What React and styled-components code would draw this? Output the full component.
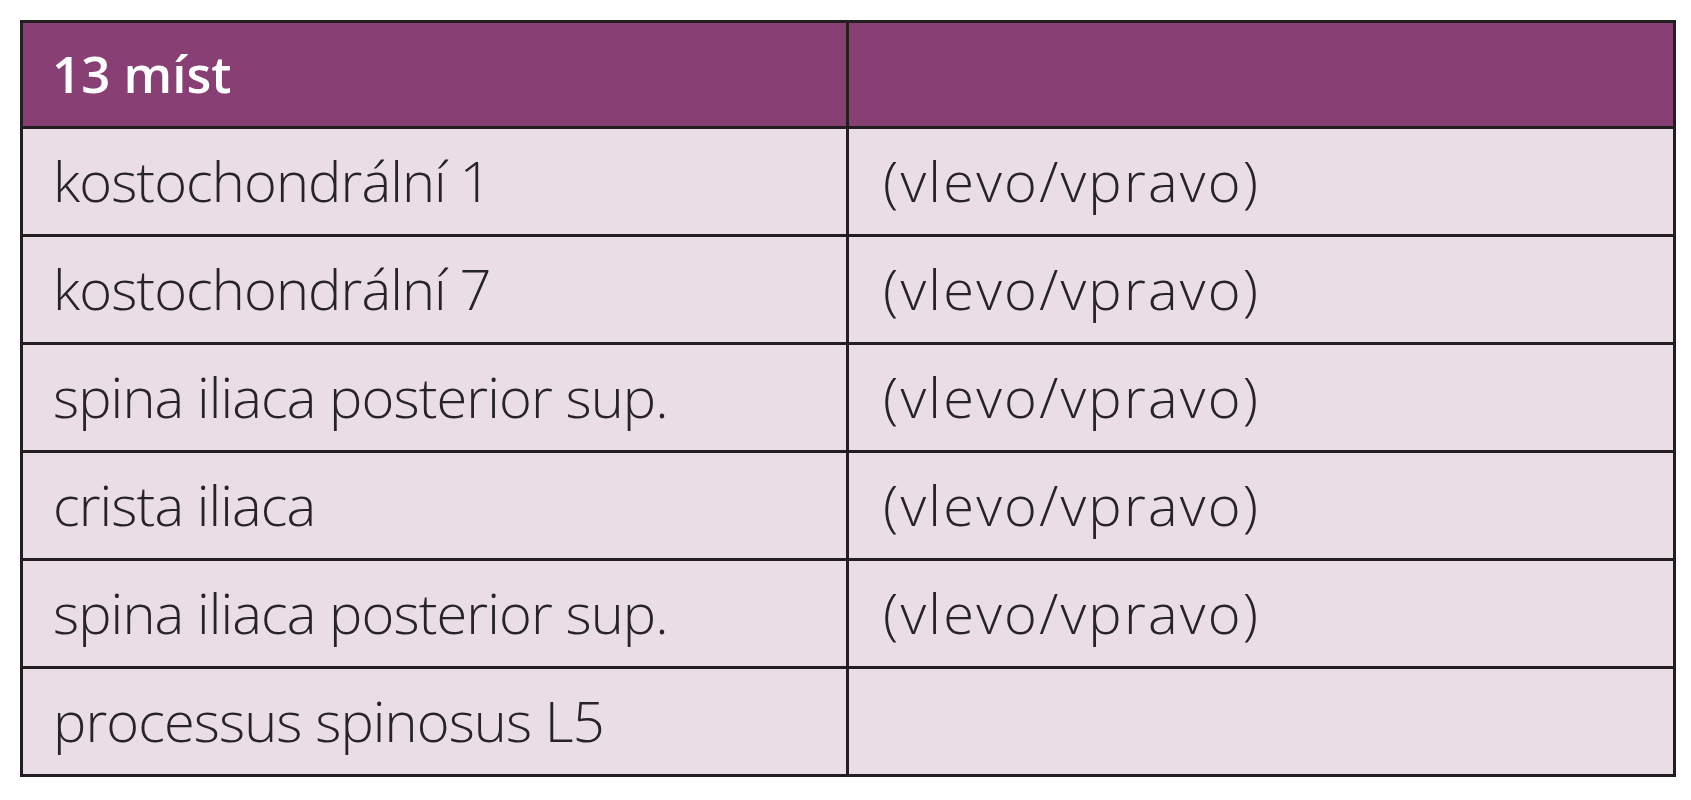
import React from 'react'
import styled, { createGlobalStyle } from 'styled-components'

const GlobalStyle = createGlobalStyle`
  html, body {
    margin: 0;
    padding: 0;
    background: #ffffff;
  }
`

const rows = [
  { place: 'kostochondrální 1', side: '(vlevo/vpravo)' },
  { place: 'kostochondrální 7', side: '(vlevo/vpravo)' },
  { place: 'spina iliaca posterior sup.', side: '(vlevo/vpravo)' },
  { place: 'crista iliaca', side: '(vlevo/vpravo)' },
  { place: 'spina iliaca posterior sup.', side: '(vlevo/vpravo)' },
  { place: 'processus spinosus L5', side: '' },
]

export default function App() {
  return (
    <>
      <GlobalStyle />
      <Page>
        <Table>
          <colgroup>
            <col style={{ width: 826 }} />
            <col />
          </colgroup>
          <thead>
            <tr>
              <HeadCell>13 míst</HeadCell>
              <HeadCell />
            </tr>
          </thead>
          <tbody>
            {rows.map((row, i) => (
              <tr key={i}>
                <Cell>{row.place}</Cell>
                <Cell $side>{row.side}</Cell>
              </tr>
            ))}
          </tbody>
        </Table>
      </Page>
    </>
  )
}

const Page = styled.div`
  padding: 20px 15px 20px 20px;
`

const Table = styled.table`
  width: 1656px;
  border-collapse: collapse;
  table-layout: fixed;
  border: 3px solid #231f20;
  font-family: 'Open Sans', 'Liberation Sans', sans-serif;
`

const HeadCell = styled.th`
  height: 99px;
  padding: 0 0 4px 29px;
  background: #873f74;
  border: 3px solid #231f20;
  color: #ffffff;
  font-size: 51px;
  font-weight: 600;
  text-align: left;
  vertical-align: middle;
`

const Cell = styled.td`
  height: 101px;
  padding: ${(p) => (p.$side ? '0 0 4px 34px' : '0 0 4px 30px')};
  background: #eadde6;
  border: 3px solid #231f20;
  color: #262427;
  font-size: 56px;
  font-weight: 300;
  letter-spacing: ${(p) => (p.$side ? '2.2px' : '-0.9px')};
  text-align: left;
  vertical-align: middle;
  white-space: nowrap;
`
